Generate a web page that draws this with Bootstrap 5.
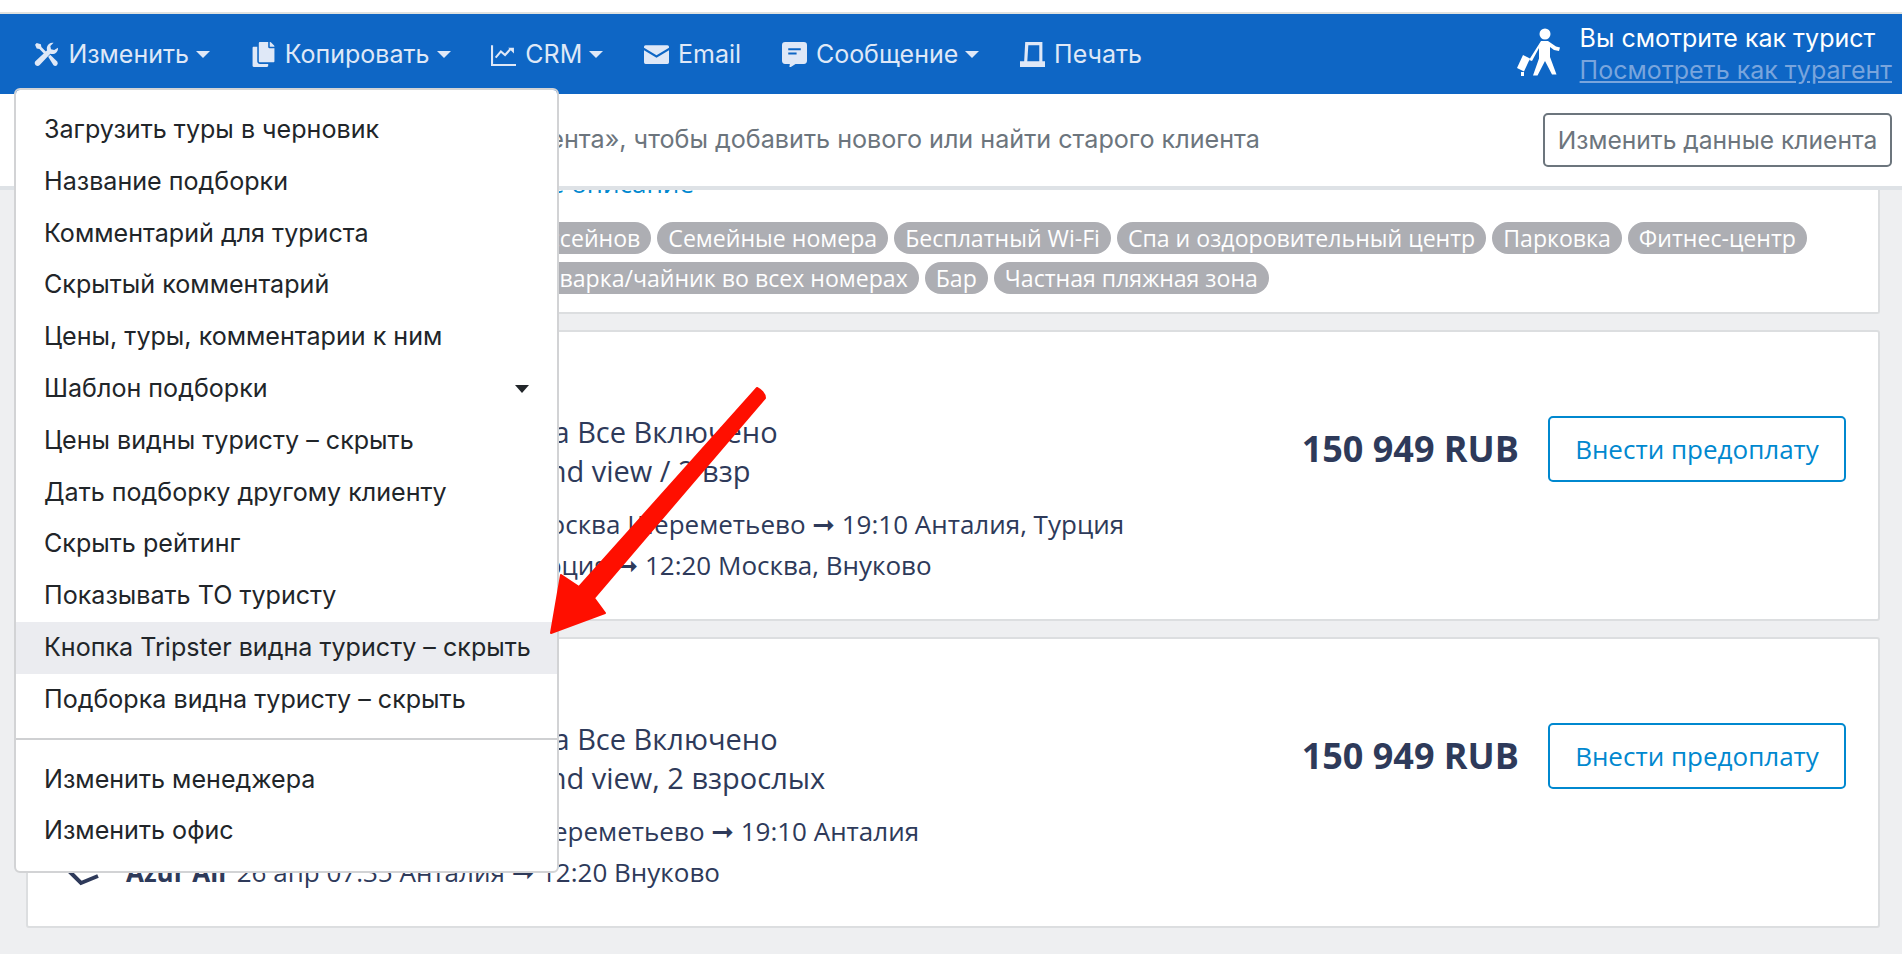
<!DOCTYPE html>
<html lang="ru">
<head>
<meta charset="utf-8">
<title>Подборка</title>
<link href="https://cdn.jsdelivr.net/npm/bootstrap@5.3.0/dist/css/bootstrap.min.css" rel="stylesheet">
<style>
html,body{height:954px;overflow:hidden}
body{background:#eeeff1;font-family:Inter,"Liberation Sans",sans-serif;color:#212529;position:relative}
.topgap{height:14px;background:#fff;border-bottom:2px solid #e0e2e0}
.mainbar{height:80px;background:#0e66c5;padding-left:14px;padding-right:10px;position:relative;z-index:20}
.mainbar .nav-link{color:#dfe8f7;font-size:25px;padding:0 20.4px;display:flex;align-items:center;gap:9px;line-height:28px}
.mainbar .dropdown-toggle::after{margin-left:-2px;border-top-width:7px;border-right-width:7px;border-left-width:7px;border-bottom:0;color:#dfe8f7}
.navico{width:25px;height:25px;fill:#dfe8f7;flex:none}
.roleico{width:44px;height:52px;flex:none}
.rolebox{font-size:25px;line-height:32px;color:#fff;margin-left:19px;white-space:nowrap}
.rolebox a{color:#79a5dd}
.editmenu{display:block;left:0!important;top:48px!important;margin:0;width:545px;padding:14px 0 14px;border:2px solid #d2d3d5;border-radius:6px;font-size:25.1px;box-shadow:none}
.editmenu .dropdown-item{height:51.8px;line-height:51.8px;padding:0 28px;color:#212529;display:flex;justify-content:space-between;align-items:center}
.editmenu .dropdown-item.hovered{background:#ebecf0}
.editmenu .dropdown-divider{margin:12px 0 14px;border-top:2px solid #cfd0d2;opacity:1}
.subcaret{width:0;height:0;border-top:8px solid #212529;border-left:7px solid transparent;border-right:7px solid transparent}
.clientbar{height:96px;background:#fff;border-bottom:4px solid #dee2e6;padding:0 10px 0 14px;position:relative;z-index:10;color:#6c757d;font-size:25.15px;white-space:nowrap}
.clientbtn{height:54px;width:349px;border:2px solid #6c757d;border-radius:5px;color:#6c757d;font-size:24.6px;padding:0;background:#fff}
.pagebody{padding:0 22px 0 26px;font-family:"Open Sans","Noto Sans",sans-serif;color:#2e3a5a}
.offerbox{background:#fff;border:2px solid #dcdee0;border-radius:3px;margin-bottom:16px;overflow:hidden}
.offertop{height:124px;border-top:0;padding-left:90px;border-top-left-radius:0;border-top-right-radius:0}
.morelink{display:block;width:576px;text-align:right;font-size:26px;line-height:30px;margin-top:-22px;color:#0088cf;text-decoration:none}
.tagset{display:flex;flex-wrap:wrap;gap:8px 6px;margin-top:24px}
.tagpill{background:#adaeb3;color:#fff;font-size:23.1px;line-height:32px;height:32px;padding:0 11px;border-radius:16px;white-space:nowrap}
.tagtight{padding-right:6px}
.offerrow{height:291px;padding:80px 32px 0 38px;display:flex;justify-content:space-between;align-items:flex-start}
.offertitle{font-size:29px;line-height:39px;margin-left:62.5px;white-space:nowrap}
.tripline{display:flex;align-items:center;font-size:26px;line-height:41px;height:41px;white-space:nowrap}
.trippad{margin-top:14px}
.tripico{width:34px;height:34px;flex:none;margin-right:26px;fill:#2e3a5a}
.tripline b{font-weight:700}
.tripline b.carrierwide{letter-spacing:-.25px}
.arr{font-family:"DejaVu Sans",sans-serif;font-size:27px;line-height:1}
.pricebox{display:flex;align-items:center;gap:29px;margin-top:4px}
.pricetag{font-size:36px;font-weight:700;line-height:66px;white-space:nowrap}
.paybtn{width:298px;height:66px;border:2px solid #0088cf;border-radius:5px;color:#0088cf;background:#fff;font-size:26px;padding:0}
.redarrow{position:absolute;left:540px;top:380px;width:240px;height:260px;z-index:30}
</style>
</head>
<body>
<div class="topgap"></div>
<nav class="mainbar d-flex align-items-center">
  <ul class="nav flex-nowrap align-items-center">
    <li class="nav-item dropdown position-relative">
      <a class="nav-link dropdown-toggle" href="#">
        <svg class="navico" viewBox="0 0 24 24"><path d="M2.6 1 1 2.6l1.6 3.6 2.6.5 5.2 5.2 1.9-1.9-5.2-5.2-.5-2.6z"/><path d="m13.6 14.2 2-2 6.6 6.6a2.6 2.6 0 0 1-.1 3.4 2.5 2.5 0 0 1-3.4 0z"/><path d="M23 5.6a5.5 5.5 0 0 1-7.3 5.7L5.5 22a3 3 0 0 1-3.9.2 3 3 0 0 1 .2-4.2L12.6 8a5.5 5.5 0 0 1 6.2-7.2l-3.1 3.1.6 3 3.1.7z"/></svg>
        Изменить
      </a>
      <div class="dropdown-menu editmenu position-absolute">
        <a class="dropdown-item" href="#">Загрузить туры в черновик</a>
        <a class="dropdown-item" href="#">Название подборки</a>
        <a class="dropdown-item" href="#">Комментарий для туриста</a>
        <a class="dropdown-item" href="#">Скрытый комментарий</a>
        <a class="dropdown-item" href="#">Цены, туры, комментарии к ним</a>
        <a class="dropdown-item" href="#">Шаблон подборки<span class="subcaret"></span></a>
        <a class="dropdown-item" href="#">Цены видны туристу – скрыть</a>
        <a class="dropdown-item" href="#">Дать подборку другому клиенту</a>
        <a class="dropdown-item" href="#">Скрыть рейтинг</a>
        <a class="dropdown-item" href="#">Показывать ТО туристу</a>
        <a class="dropdown-item hovered" href="#">Кнопка Tripster видна туристу – скрыть</a>
        <a class="dropdown-item" href="#">Подборка видна туристу – скрыть</a>
        <div class="dropdown-divider"></div>
        <a class="dropdown-item" href="#">Изменить менеджера</a>
        <a class="dropdown-item" href="#">Изменить офис</a>
      </div>
    </li>
    <li class="nav-item"><a class="nav-link dropdown-toggle" href="#">
      <svg class="navico" viewBox="0 0 448 512"><path d="M320 448v40c0 13.255-10.745 24-24 24H24c-13.255 0-24-10.745-24-24V120c0-13.255 10.745-24 24-24h72v296c0 30.879 25.121 56 56 56h168zm0-344V0H152c-13.255 0-24 10.745-24 24v368c0 13.255 10.745 24 24 24h272c13.255 0 24-10.745 24-24V128H344c-13.2 0-24-10.8-24-24zm120.971-31.029L375.029 7.029A24 24 0 0 0 358.059 0H352v96h96v-6.059a24 24 0 0 0-7.029-16.97z"/></svg>
      Копировать</a></li>
    <li class="nav-item"><a class="nav-link dropdown-toggle" href="#">
      <svg class="navico" viewBox="0 0 24 24"><path d="M1 3v19h23" fill="none" stroke="#dfe8f7" stroke-width="2"/><path d="m4.500 15 5-6 4 3.500 5-5.500" fill="none" stroke="#dfe8f7" stroke-width="2"/><path d="m16.500 5.500h5.500v5.500z"/></svg>
      CRM</a></li>
    <li class="nav-item"><a class="nav-link" href="#">
      <svg class="navico" viewBox="0 0 24 24"><path d="M1.500 3h21A1.500 1.500 0 0 1 24 4.500v.9L12 12.700 0 5.400v-.9A1.500 1.500 0 0 1 1.500 3z"/><path d="M0 7.800 12 15 24 7.800v11.700a1.500 1.500 0 0 1-1.500 1.500h-21A1.500 1.500 0 0 1 0 19.500z"/></svg>
      Email</a></li>
    <li class="nav-item"><a class="nav-link dropdown-toggle" href="#">
      <svg class="navico" viewBox="0 0 24 24"><path d="M3 0h18a3 3 0 0 1 3 3v15a3 3 0 0 1-3 3h-8l-6 4 .5-4H3a3 3 0 0 1-3-3V3a3 3 0 0 1 3-3z"/><path d="M6 7h12M6 11h8" stroke="#0e66c5" stroke-width="1.800"/></svg>
      Сообщение</a></li>
    <li class="nav-item"><a class="nav-link" href="#">
      <svg class="navico" viewBox="0 0 24 24"><path d="M0 18.500h4L5 0h16.500v18.500H24V25H0zM8 3 7 18.500h11.500V3z"/></svg>
      Печать</a></li>
  </ul>
  <div class="ms-auto d-flex align-items-center">
    <svg class="roleico" viewBox="0 0 44 52" fill="#fff"><circle cx="28" cy="6" r="5.500"/><path d="M24 13h7l8 5.500 4 1-1 3.500-5-1-4-3v10l6.500 17.500h-4.500L28 33l-7.500 14.500H16l6-17V20l-7 13-3-1z"/><path d="m6 27 7 3.500-6 13-7-3.500z"/><path d="M4 44h3v4H4z"/></svg>
    <div class="rolebox">Вы смотрите как турист<br><a href="#">Посмотреть как турагент</a></div>
  </div>
</nav>
<div class="clientbar d-flex align-items-center justify-content-between">
  <span>Сначала нажмите в «Изменить данные клиента», чтобы добавить нового или найти старого клиента</span>
  <button class="btn clientbtn" type="button">Изменить данные клиента</button>
</div>
<main class="pagebody">
  <section class="offerbox offertop">
    <a class="morelink" href="#">Показать полное описание</a>
    <div class="tagset">
      <span class="tagpill">Трансфер в аэропорт</span>
      <span class="tagpill">Несколько бассейнов</span>
      <span class="tagpill">Семейные номера</span>
      <span class="tagpill">Бесплатный Wi-Fi</span>
      <span class="tagpill">Спа и оздоровительный центр</span>
      <span class="tagpill">Парковка</span>
      <span class="tagpill">Фитнес-центр</span>
      <span class="tagpill">Кондиционер</span>
      <span class="tagpill tagtight">Круглосуточно</span>
      <span class="tagpill">Кофеварка/чайник во всех номерах</span>
      <span class="tagpill">Бар</span>
      <span class="tagpill">Частная пляжная зона</span>
    </div>
  </section>
  <section class="offerbox offerrow">
    <div>
      <div class="offertitle">Crystal Sunset Resort 5*, Ультра Все Включено<br>Standard Double Room with Land view / 2 взр</div>
      <div class="tripline trippad"><svg class="tripico" viewBox="0 0 34 34"></svg><span><b class="carrierwide">Nordwind Airlines</b> 19 апр 15:55 Москва Шереметьево <span class="arr">➞</span> 19:10 Анталия, Турция</span></div>
      <div class="tripline"><svg class="tripico" viewBox="0 0 34 34"></svg><span><b>Azur Air</b> 26 апр 07:35 Анталия, Турция <span class="arr">➞</span> 12:20 Москва, Внуково</span></div>
    </div>
    <div class="pricebox"><span class="pricetag">150 949 RUB</span><button class="btn paybtn" type="button">Внести предоплату</button></div>
  </section>
  <section class="offerbox offerrow">
    <div>
      <div class="offertitle">Crystal Sunset Resort 5*, Ультра Все Включено<br>Standard Double Room with Land view, 2 взрослых</div>
      <div class="tripline trippad"><svg class="tripico" viewBox="0 0 34 34"></svg><span><b class="carrierwide">Nordwind Airlines</b> 19 апр 15:55 Шереметьево <span class="arr">➞</span> 19:10 Анталия</span></div>
      <div class="tripline"><svg class="tripico" viewBox="0 0 34 34"><path d="M2 14 15 27 32 20" fill="none" stroke="#2e3a5a" stroke-width="4"/></svg><span><b>Azur Air</b> 26 апр 07:35 Анталия <span class="arr">➞</span> 12:20 Внуково</span></div>
    </div>
    <div class="pricebox"><span class="pricetag">150 949 RUB</span><button class="btn paybtn" type="button">Внести предоплату</button></div>
  </section>
</main>
<svg class="redarrow" viewBox="540 380 240 260"><path d="M757 388c4 2 8 6 8 10L594 598l11 15-54 20 10-58 18 12z" fill="#ff0f00" stroke="#ff0f00" stroke-width="2" stroke-linejoin="round"/></svg>
<script src="https://cdn.jsdelivr.net/npm/bootstrap@5.3.0/dist/js/bootstrap.bundle.min.js"></script>
</body>
</html>
